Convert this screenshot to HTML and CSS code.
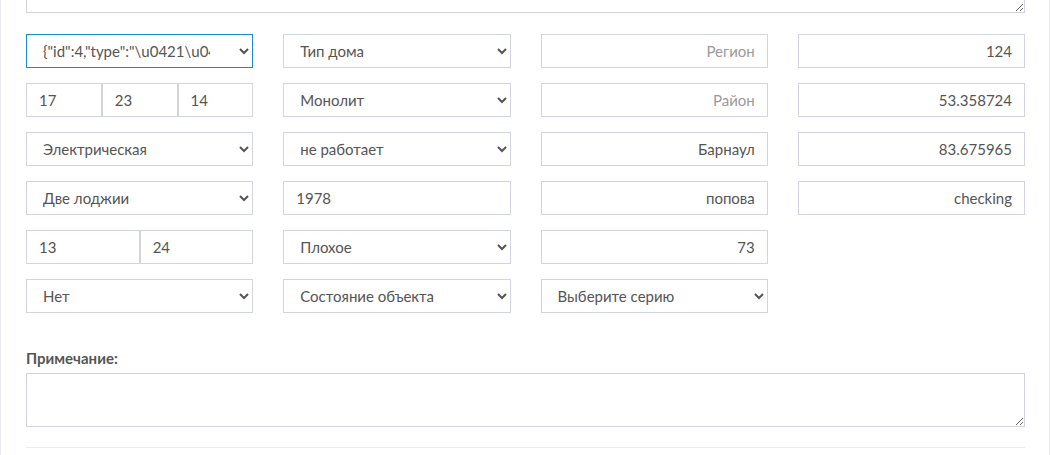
FILE: index.html
```html
<!DOCTYPE html>
<html lang="ru">
<head>
<meta charset="utf-8">
<title>Объект</title>
<link rel="stylesheet" href="styles.css">
</head>
<body>
<div class="card">
  <textarea class="top-note"></textarea>
  <div class="grid">
    <select class="field focus wide-pad"><option>{"id":4,"type":"\u0421\u043c\u0435\u0448"}</option></select>
    <select class="field"><option>Тип дома</option></select>
    <input class="field right" placeholder="Регион">
    <input class="field right" value="124">

    <div class="split">
      <input class="field" value="17"><input class="field" value="23"><input class="field" value="14">
    </div>
    <select class="field"><option>Монолит</option></select>
    <input class="field right" placeholder="Район">
    <input class="field right" value="53.358724">

    <select class="field"><option>Электрическая</option></select>
    <select class="field"><option>не работает</option></select>
    <input class="field right" value="Барнаул">
    <input class="field right" value="83.675965">

    <select class="field"><option>Две лоджии</option></select>
    <input class="field" value="1978">
    <input class="field right" value="попова">
    <input class="field right" value="checking">

    <div class="split">
      <input class="field" value="13"><input class="field" value="24">
    </div>
    <select class="field"><option>Плохое</option></select>
    <input class="field right" value="73">
    <div class="empty"></div>

    <select class="field"><option>Нет</option></select>
    <select class="field"><option>Состояние объекта</option></select>
    <select class="field"><option>Выберите серию</option></select>
    <div class="empty"></div>
  </div>
  <label class="label" for="note">Примечание:</label>
  <textarea class="note" id="note"></textarea>
  <hr class="rule">
</div>
</body>
</html>
```
FILE: styles.css
```css
* { box-sizing: border-box; }
html, body { margin: 0; padding: 0; background: #fff; overflow: hidden; }
body { font-family: "Lato", "Open Sans", sans-serif; color: #555; }

.card {
  display: flow-root;
  width: 1050px;
  height: 455px;
  overflow: hidden;
  border-left: 1px solid #e8ebf0;
  border-right: 1px solid #e8ebf0;
  padding: 0 24px 0 25px;
}

.top-note {
  display: block;
  width: 100%;
  height: 54px;
  margin: -41px 0 0 0;
  border: 1px solid #d2d5df;
  border-radius: 0;
  resize: vertical;
}

.grid {
  display: grid;
  grid-template-columns: repeat(4, 1fr);
  grid-auto-rows: 34px;
  column-gap: 30px;
  row-gap: 15px;
  margin-top: 21px;
}

.field {
  width: 100%;
  height: 34px;
  min-width: 0;
  margin: 0;
  padding: 0 12px;
  border: 1px solid #d2d5df;
  border-radius: 0;
  background-color: #fff;
  font-family: "Lato", "Open Sans", sans-serif;
  font-size: 15px;
  color: #555;
  outline: none;
}
select.field { padding: 0 14px 0 12px; }
select.field.wide-pad { padding-right: 26px; }
.field.right { text-align: right; }
.field::placeholder { color: #9a9a9a; opacity: 1; }
.field.focus { border-color: #1f8ac8; }

.split { display: flex; }
.split .field { flex: 1 1 0; }

.label {
  display: block;
  margin-top: 35px;
  margin-bottom: 5px;
  font-size: 15px;
  line-height: 20px;
  font-weight: 700;
  color: #555;
}

.note {
  display: block;
  width: 100%;
  height: 54px;
  margin: 0;
  border: 1px solid #d2d5df;
  border-radius: 0;
  resize: vertical;
}

.rule {
  margin: 20px 0 0 0;
  border: 0;
  border-top: 1px solid #ececec;
}
```
